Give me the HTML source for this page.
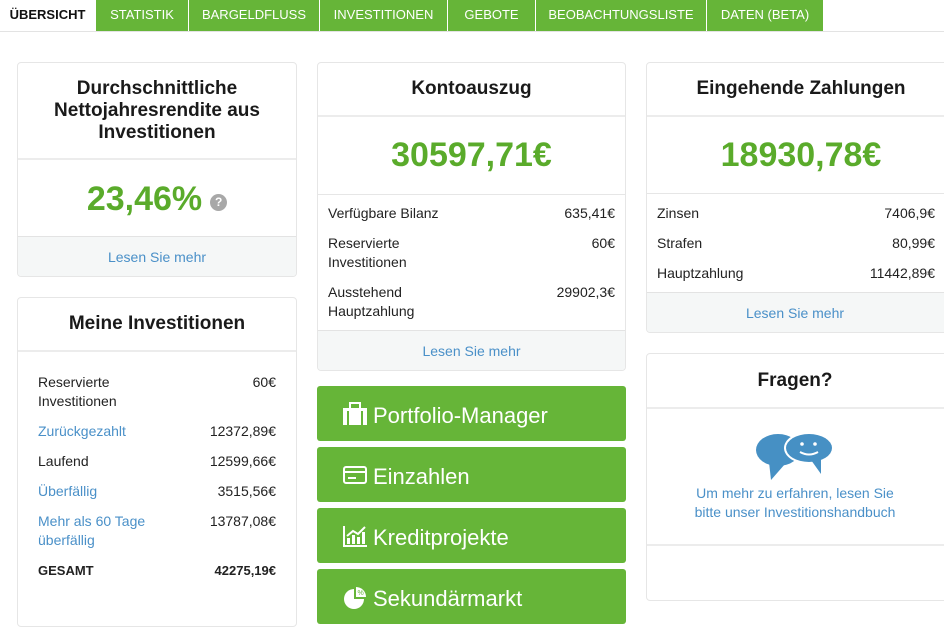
<!DOCTYPE html>
<html><head><meta charset="utf-8"><style>
*{box-sizing:border-box;margin:0;padding:0}
body{width:944px;height:615px;overflow:hidden;background:#fff;font-family:"Liberation Sans","DejaVu Sans",sans-serif;color:#222;position:relative}
.tabs{position:absolute;top:0;left:0;width:944px;height:32px;border-bottom:1px solid #e3e3e3}
.tab{position:absolute;top:0;height:31px;background:#66b538;color:#fff;font-size:13px;line-height:30px;text-align:center;border-right:1px solid #fff}
.tab.a{background:#fff;color:#111;font-weight:bold;font-size:13px}
.card{position:absolute;border:1px solid #e6e6e6;border-radius:4px;background:#fff;overflow:hidden}
.hd{border-bottom:2px solid #ececec;text-align:center;font-weight:bold;font-size:19px;color:#1a1a1a;display:flex;align-items:center;justify-content:center;line-height:22px}
.big{color:#5aab2b;font-weight:bold;font-size:34px;text-align:center;border-bottom:1px solid #e6e6e6;display:flex;align-items:center;justify-content:center}
.ft{background:#f5f7f7;border-top:1px solid #e3e3e3;text-align:center;color:#4a90c8;font-size:14px;position:absolute;left:0;right:0;bottom:0}
.row{position:absolute;left:10px;right:10px;font-size:14px;line-height:19px;color:#222}
.row .r{position:absolute;right:0;top:0}
.bl{color:#4a90c8}
.btn{position:absolute;left:317px;width:309px;height:55px;background:#66b538;border-radius:3px;color:#fff;font-size:22px;line-height:60px;padding-left:56px}
.btn svg{position:absolute;left:25px;top:16px}
</style></head><body>
<div class="tabs">
<div class="tab a" style="left:0;width:96px">ÜBERSICHT</div>
<div class="tab" style="left:96px;width:93px">STATISTIK</div>
<div class="tab" style="left:189px;width:131px">BARGELDFLUSS</div>
<div class="tab" style="left:320px;width:128px">INVESTITIONEN</div>
<div class="tab" style="left:448px;width:88px">GEBOTE</div>
<div class="tab" style="left:536px;width:171px">BEOBACHTUNGSLISTE</div>
<div class="tab" style="left:707px;width:117px">DATEN (BETA)</div>
</div>

<div class="card" style="left:17px;top:62px;width:280px;height:215px">
<div class="hd" style="height:97px">Durchschnittliche<br>Nettojahresrendite aus<br>Investitionen</div>
<div class="big" style="height:78px;border:0">23,46%<span style="display:inline-block;width:17px;height:17px;border-radius:50%;background:#a8a8a8;color:#fff;font-size:12px;line-height:17px;margin-left:8px;margin-top:6px">?</span></div>
<div class="ft" style="height:40px;line-height:40px">Lesen Sie mehr</div>
</div>

<div class="card" style="left:17px;top:297px;width:280px;height:330px">
<div class="hd" style="height:54px">Meine Investitionen</div>
<div class="row" style="top:75px;left:20px;right:20px">Reservierte<br>Investitionen<span class="r">60€</span></div>
<div class="row bl" style="top:124px;left:20px;right:20px">Zurückgezahlt<span class="r" style="color:#222">12372,89€</span></div>
<div class="row" style="top:154px;left:20px;right:20px">Laufend<span class="r">12599,66€</span></div>
<div class="row bl" style="top:184px;left:20px;right:20px">Überfällig<span class="r" style="color:#222">3515,56€</span></div>
<div class="row bl" style="top:214px;left:20px;right:20px">Mehr als 60 Tage<br>überfällig<span class="r" style="color:#222">13787,08€</span></div>
<div class="row" style="top:263px;left:20px;right:20px;font-weight:bold;font-size:13px">GESAMT<span class="r">42275,19€</span></div>
</div>

<div class="card" style="left:317px;top:62px;width:309px;height:309px">
<div class="hd" style="height:54px">Kontoauszug</div>
<div class="big" style="height:78px">30597,71€</div>
<div class="row" style="top:141px">Verfügbare Bilanz<span class="r">635,41€</span></div>
<div class="row" style="top:171px">Reservierte<br>Investitionen<span class="r">60€</span></div>
<div class="row" style="top:220px">Ausstehend<br>Hauptzahlung<span class="r">29902,3€</span></div>
<div class="ft" style="height:40px;line-height:40px">Lesen Sie mehr</div>
</div>

<div class="btn" style="top:386px"><svg width="26" height="24" viewBox="0 0 26 24"><rect x="1" y="6" width="24" height="17" fill="#fff"/><rect x="8" y="1" width="10" height="6" fill="none" stroke="#fff" stroke-width="2"/><rect x="5" y="9" width="2" height="14" fill="#66b538"/><rect x="19" y="9" width="2" height="14" fill="#66b538"/></svg>Portfolio-Manager</div>
<div class="btn" style="top:447px"><svg width="26" height="24" viewBox="0 0 26 24"><rect x="2" y="4" width="22" height="16" rx="2" fill="none" stroke="#fff" stroke-width="2"/><rect x="2" y="8" width="22" height="2" fill="#fff"/><rect x="6" y="14" width="8" height="2" fill="#fff"/></svg>Einzahlen</div>
<div class="btn" style="top:508px"><svg width="26" height="24" viewBox="0 0 26 24"><path d="M2 2V22H25" stroke="#fff" stroke-width="2" fill="none"/><path d="M5 20V14H8V20ZM10 20V11H13V20ZM15 20V13H18V20ZM20 20V8H23V20Z" fill="#fff"/><path d="M5 12L11 7L16 10L23 3" stroke="#fff" stroke-width="2" fill="none"/></svg>Kreditprojekte</div>
<div class="btn" style="top:569px"><svg width="26" height="26" viewBox="0 0 26 26"><path d="M12 4A10 10 0 1 0 22 14H12Z" fill="#fff"/><path d="M14 2A10 10 0 0 1 24 12H14Z" fill="#fff"/><text x="15.5" y="10" font-size="7" fill="#66b538" font-family="Liberation Sans">%</text></svg>Sekundärmarkt</div>

<div class="card" style="left:646px;top:62px;width:310px;height:271px">
<div class="hd" style="height:54px">Eingehende Zahlungen</div>
<div class="big" style="height:77px">18930,78€</div>
<div class="row" style="top:141px;right:20px">Zinsen<span class="r">7406,9€</span></div>
<div class="row" style="top:171px;right:20px">Strafen<span class="r">80,99€</span></div>
<div class="row" style="top:201px;right:20px">Hauptzahlung<span class="r">11442,89€</span></div>
<div class="ft" style="height:40px;line-height:40px;padding-right:12px">Lesen Sie mehr</div>
</div>

<div class="card" style="left:646px;top:353px;width:310px;height:248px">
<div class="hd" style="height:55px;padding-right:12px">Fragen?</div>
<div style="position:absolute;top:54px;left:0;right:0;height:138px;border-bottom:2px solid #ececec">
<svg style="position:absolute;left:108px;top:24px" width="80" height="50" viewBox="0 0 80 50"><ellipse cx="23" cy="18" rx="22" ry="16" fill="#4690c4"/><path d="M14 30L16 48L30 32Z" fill="#4690c4"/><ellipse cx="54" cy="16" rx="25" ry="16" fill="#fff"/><ellipse cx="54" cy="16" rx="23" ry="14" fill="#4690c4"/><path d="M56 28L66 42L66 26Z" fill="#4690c4"/><circle cx="47" cy="12" r="1.8" fill="#fff"/><circle cx="60" cy="12" r="1.8" fill="#fff"/><path d="M45 20Q54 25 63 20" stroke="#fff" stroke-width="2" fill="none"/></svg>
<div style="position:absolute;top:76px;left:0;right:12px;text-align:center;color:#4a90c8;font-size:14px;line-height:19px">Um mehr zu erfahren, lesen Sie<br>bitte unser Investitionshandbuch</div>
</div>
</div>
</body></html>
